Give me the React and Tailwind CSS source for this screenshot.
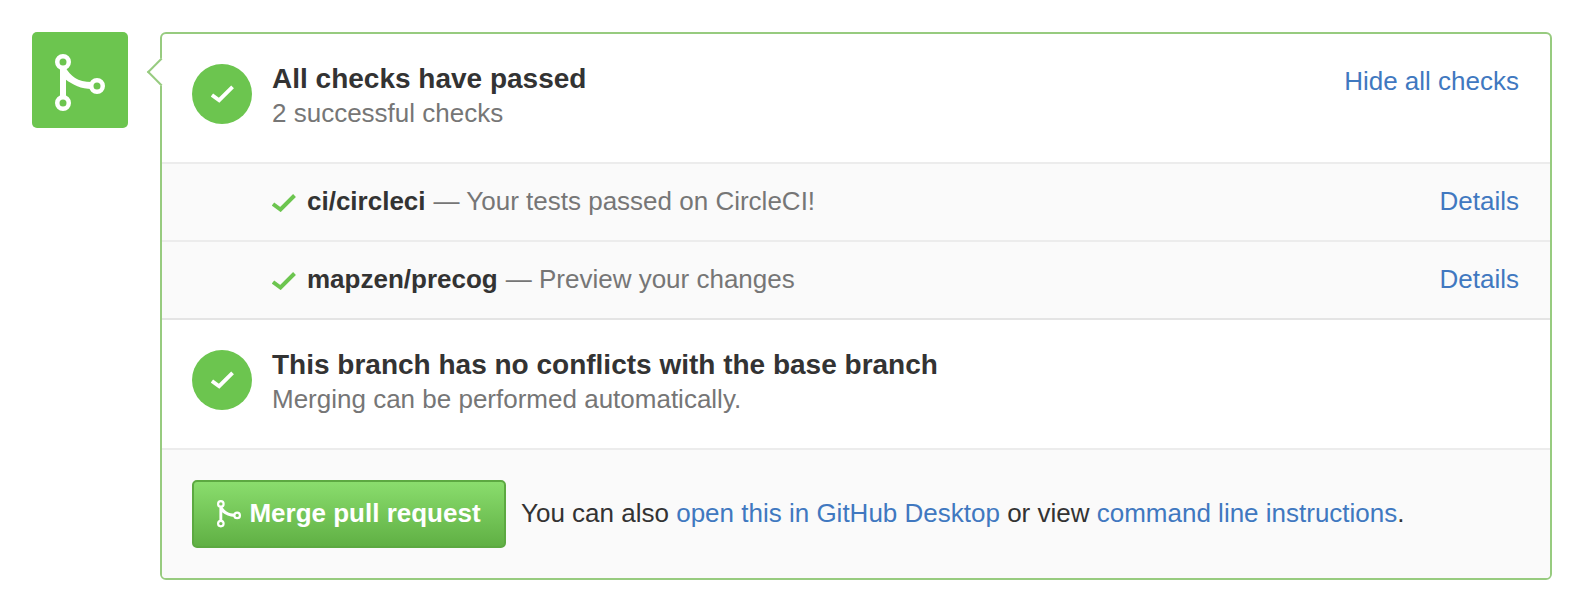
const MergeIcon = ({ className }) => (
  <svg viewBox="0 0 50 58" fill="none" className={className}>
    <circle cx="8" cy="8" r="5.75" stroke="currentColor" strokeWidth="4.5" />
    <circle cx="8" cy="49" r="5.75" stroke="currentColor" strokeWidth="4.5" />
    <circle cx="42" cy="32" r="5.75" stroke="currentColor" strokeWidth="4.5" />
    <path d="M5 13H11V44H5Z" fill="currentColor" />
    <path d="M10 13C16 22 22 28 37 28V35C26 35 18 31 10 25Z" fill="currentColor" />
  </svg>
);

const Check = ({ className }) => (
  <svg viewBox="0 0 24 18" fill="none" className={className}>
    <path d="M1 10L8.5 15.5L22.5 1.5" stroke="currentColor" strokeWidth="4" />
  </svg>
);

const StatusCircle = () => (
  <div className="w-[60px] h-[60px] rounded-full bg-[#6cc54f] flex items-center justify-center shrink-0 text-white">
    <Check className="w-[23px] h-[18px]" />
  </div>
);

const linkClass = "text-[#4078c0]";

const CheckRow = ({ name, text }) => (
  <div className="h-[78px] bg-[#fafafa] border-t-2 border-[#ececec] flex items-center pb-[2px] pl-[110px] pr-[31px] text-[26px]">
    <Check className="w-[24px] h-[18px] text-[#6cc54f] mr-[11px] mt-[3px]" />
    <span className="font-bold text-[#333333]">{name}</span>
    <span className="text-[#767676] ml-[8px]">— {text}</span>
    <a className={`ml-auto ${linkClass}`}>Details</a>
  </div>
);

export default function App() {
  return (
    <div className="w-[1581px] h-[611px] bg-white flex items-start pt-[32px] pl-[32px] font-['Liberation_Sans',Arial,sans-serif]">
      <div className="w-[96px] h-[96px] rounded-[5px] bg-[#6cc54f] flex items-center justify-center text-white shrink-0">
        <MergeIcon className="w-[50px] h-[58px] mt-[6px]" />
      </div>
      <div className="relative ml-[32px] w-[1392px] h-[548px] border-2 border-[#97cb7f] rounded-[6px] bg-white flex flex-col">
        <div className="absolute left-[-11px] top-[28px] w-[20px] h-[20px] rotate-45 bg-white border-l-2 border-b-2 border-[#97cb7f]" />
        <div className="relative h-[128px] flex items-start pl-[30px] pr-[31px] pt-[30px]">
          <StatusCircle />
          <div className="ml-[20px] -mt-[2px]">
            <div className="font-bold text-[28px] leading-[34px] text-[#333333]">All checks have passed</div>
            <div className="text-[26px] leading-[34px] text-[#767676]">2 successful checks</div>
          </div>
          <a className={`ml-auto text-[26px] leading-[34px] ${linkClass}`}>Hide all checks</a>
        </div>
        <CheckRow name="ci/circleci" text="Your tests passed on CircleCI!" />
        <CheckRow name="mapzen/precog" text="Preview your changes" />
        <div className="h-[130px] border-t-2 border-[#e4e4e4] flex items-start pl-[30px] pt-[30px]">
          <StatusCircle />
          <div className="ml-[20px] -mt-[2px]">
            <div className="font-bold text-[28px] leading-[34px] text-[#333333]">This branch has no conflicts with the base branch</div>
            <div className="text-[26px] leading-[34px] text-[#767676]">Merging can be performed automatically.</div>
          </div>
        </div>
        <div className="flex-1 rounded-b-[4px] bg-[#fafafa] border-t-2 border-[#ececec] flex items-center pl-[30px] text-[26px] text-[#333333]">
          <button className="w-[314px] h-[68px] pb-[2px] rounded-[5px] border-2 border-[#5ca941] bg-gradient-to-b from-[#8add6d] to-[#60b044] flex items-center justify-center text-white font-bold text-[26px]">
            <MergeIcon className="w-[24px] h-[28px] mr-[8px] mt-[2px]" />
            Merge pull request
          </button>
          <span className="ml-[15px] mb-[2px]">
            You can also <a className={linkClass}>open this in GitHub Desktop</a> or view <a className={linkClass}>command line instructions</a>.
          </span>
        </div>
      </div>
    </div>
  );
}
